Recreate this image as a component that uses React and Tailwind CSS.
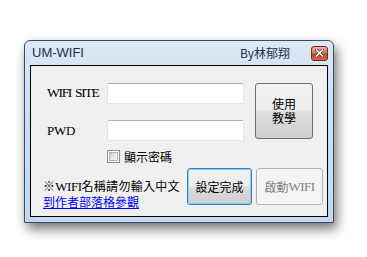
import React from 'react';

const cjk = { fontFamily: '"Noto Sans CJK TC", "Liberation Sans", sans-serif' };
const serif = { fontFamily: '"Liberation Serif", "Noto Sans CJK TC", serif' };

const btnFace =
  'bg-[linear-gradient(to_bottom,#f2f2f2_0%,#ebebeb_48%,#dddddd_52%,#cfcfcf_100%)]';

const TextBox = () => (
  <div className="w-[137px] h-[21px] bg-white border border-[#dfe3ea] border-t-[#abadb3] rounded-[2px]" />
);

const App = () => {
  return (
    <div className="min-h-screen bg-white pt-[40px] pl-[24px]">
      <div className="w-[310px] h-[183px] border border-[#3e4a56] rounded-t-[6px] bg-[linear-gradient(to_bottom,#dce9f6_0%,#cddff2_30%,#c3d8ef_100%)] shadow-[3px_6px_12px_rgba(0,0,0,0.55)]">
        {/* title bar */}
        <div className="h-[24px] flex items-center pl-[7px]">
          <span
            className="text-[13px] text-[#1e2f45]"
            style={{ fontFamily: '"Liberation Sans", sans-serif' }}
          >
            UM-WIFI
          </span>
          <span className="ml-auto text-[12px] text-[#1e2f45]" style={cjk}>
            By林郁翔
          </span>
          <div className="ml-[21px] mr-[5px] w-[17px] h-[15px] rounded-[3px] border border-[#6e2b1f] bg-[linear-gradient(to_bottom,#eab5a3_0%,#d8765c_45%,#c7432a_55%,#d9664a_100%)] flex items-center justify-center">
            <svg width="9" height="8" viewBox="0 0 9 8">
              <path d="M1.5 1 L7.5 7 M7.5 1 L1.5 7" stroke="#5a2a20" strokeWidth="3" strokeLinecap="square" />
              <path d="M1.5 1 L7.5 7 M7.5 1 L1.5 7" stroke="#ffffff" strokeWidth="1.6" strokeLinecap="square" />
            </svg>
          </div>
        </div>

        {/* client area */}
        <div className="ml-[5px] w-[298px] h-[152px] border border-black bg-[#f0f0f0]">
          <div className="flex pt-[17px] pl-[16px]">
            <div className="flex flex-col">
              <div className="flex items-center h-[21px]">
                <span className="w-[60px] text-[13.5px] text-black tracking-[-1.3px] [word-spacing:2px]" style={serif}>
                  WIFI SITE
                </span>
                <TextBox />
              </div>
              <div className="flex items-center h-[21px] mt-[16px]">
                <span className="w-[60px] text-[13px] text-black tracking-[-0.3px]" style={serif}>
                  PWD
                </span>
                <TextBox />
              </div>
              <div className="flex items-center h-[17px] mt-[7px] pl-[60px]">
                <div className="w-[13px] h-[13px] border border-[#8e8f8f] bg-white flex items-center justify-center">
                  <div className="w-[9px] h-[9px] border border-[#b0b4b9] bg-[linear-gradient(135deg,#c9c9c9_0%,#e9e9e9_60%,#f6f6f6_100%)]" />
                </div>
                <span className="ml-[4px] text-[12px] text-black" style={cjk}>
                  顯示密碼
                </span>
              </div>
            </div>
            <div
              className={`ml-[11px] w-[58px] h-[56px] border border-[#707070] rounded-[3px] ${btnFace} flex flex-col items-center justify-center text-center text-[12px] leading-[14px] text-black`}
              style={cjk}
            >
              <span>使用</span>
              <span>教學</span>
            </div>
          </div>

          <div className="flex mt-[3px]">
            <div className="w-[156px] pl-[12px] pt-[10px] text-[12px] leading-[15px]" style={cjk}>
              <div className="text-black tracking-[0.3px]">
                ※<span style={serif} className="text-[13px] tracking-[-0.5px]">WIFI</span>名稱請勿輸入中文
              </div>
              <div className="text-[#0000ff] underline">到作者部落格參觀</div>
            </div>
            <div
              className={`w-[65px] h-[37px] border border-[#3c7fb1] rounded-[3px] ${btnFace} shadow-[inset_0_0_0_1px_#7fd4f6] flex items-center justify-center text-[12px] text-black`}
              style={cjk}
            >
              設定完成
            </div>
            <div
              className="ml-[4px] w-[67px] h-[37px] border border-[#adb2b5] rounded-[3px] bg-[#f4f4f4] flex items-center justify-center text-[12px] text-[#838383]"
              style={cjk}
            >
              啟動<span style={serif} className="text-[13px] tracking-[-0.5px]">WIFI</span>
            </div>
          </div>
        </div>
      </div>
    </div>
  );
};

export default App;
